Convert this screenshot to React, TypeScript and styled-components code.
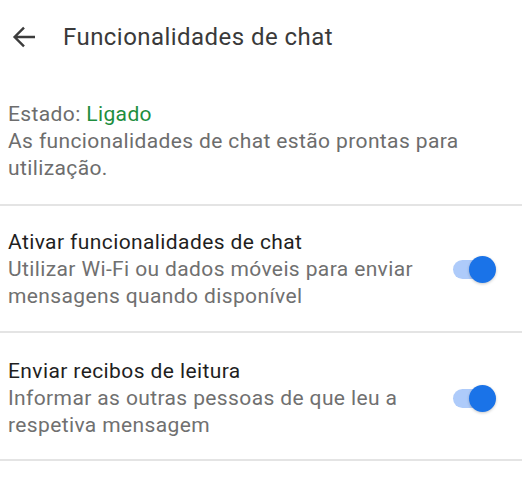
import React from "react";
import styled, { createGlobalStyle } from "styled-components";

const GlobalStyle = createGlobalStyle`
  html, body {
    margin: 0;
    padding: 0;
    background: #ffffff;
  }

  body {
    font-family: Roboto, "Noto Sans", Arial, sans-serif;
    -webkit-font-smoothing: antialiased;
  }
`;

type Setting = {
  title: string;
  description: string;
  enabled: boolean;
};

const settings: Setting[] = [
  {
    title: "Ativar funcionalidades de chat",
    description: "Utilizar Wi-Fi ou dados móveis para enviar mensagens quando disponível",
    enabled: true,
  },
  {
    title: "Enviar recibos de leitura",
    description: "Informar as outras pessoas de que leu a respetiva mensagem",
    enabled: true,
  },
];

const BackArrow: React.FC = () => (
  <svg width="24" height="24" viewBox="0 0 24 24" fill="none">
    <path
      d="M23 12H2.8M12 2.6L2.6 12l9.4 9.4"
      stroke="#3c3c3c"
      strokeWidth="2.4"
    />
  </svg>
);

const App: React.FC = () => {
  return (
    <Page>
      <GlobalStyle />
      <TopBar>
        <BackButton aria-label="Voltar">
          <BackArrow />
        </BackButton>
        <Title>Funcionalidades de chat</Title>
      </TopBar>

      <StatusBlock>
        <StatusLine>
          Estado: <StatusValue>Ligado</StatusValue>
        </StatusLine>
        <StatusText>As funcionalidades de chat estão prontas para utilização.</StatusText>
      </StatusBlock>

      {settings.map((item) => (
        <SettingRow key={item.title}>
          <SettingText>
            <SettingTitle>{item.title}</SettingTitle>
            <SettingDescription>{item.description}</SettingDescription>
          </SettingText>
          <Switch>
            <Track on={item.enabled} />
            <Thumb on={item.enabled} />
          </Switch>
        </SettingRow>
      ))}
    </Page>
  );
};

const Page = styled.div`
  width: 522px;
  min-height: 482px;
  background: #fff;
  overflow: hidden;
`;

const TopBar = styled.header`
  display: flex;
  align-items: center;
  height: 74px;
  padding-left: 12px;
`;

const BackButton = styled.button`
  display: flex;
  align-items: center;
  justify-content: center;

  width: 24px;
  height: 24px;
  padding: 0;
  margin-right: 27px;

  border: none;
  background: none;
`;

const Title = styled.h1`
  margin: 0;
  font-size: 24px;
  font-weight: 400;
  color: #3a3a3a;
  letter-spacing: 0.45px;
`;

const StatusBlock = styled.section`
  padding: 27px 50px 22px 8px;
  border-bottom: 2px solid #e4e4e4;
`;

const StatusLine = styled.p`
  margin: 0;
  font-size: 21px;
  line-height: 27px;
  letter-spacing: 0.38px;
  color: #6d6d6d;
`;

const StatusValue = styled.span`
  color: #1e8e3e;
`;

const StatusText = styled.p`
  margin: 0;
  font-size: 21px;
  line-height: 27px;
  letter-spacing: 0.38px;
  color: #6d6d6d;
`;

const SettingRow = styled.div`
  display: flex;
  align-items: center;
  padding: 22px 26px 21px 8px;
  border-bottom: 2px solid #e4e4e4;

  & + & {
    padding-top: 24px;
    padding-bottom: 20px;
  }
`;

const SettingText = styled.div`
  flex: 1;
  padding-right: 30px;
`;

const SettingTitle = styled.div`
  font-size: 21px;
  line-height: 28px;
  letter-spacing: 0.4px;
  color: #1f1f1f;
`;

const SettingDescription = styled.div`
  font-size: 21px;
  line-height: 27px;
  letter-spacing: 0.38px;
  color: #707070;
`;

const Switch = styled.div`
  position: relative;
  flex-shrink: 0;
  width: 43px;
  height: 28px;
`;

const Track = styled.div<{ on: boolean }>`
  position: absolute;
  left: 0;
  top: 5px;
  width: 37px;
  height: 19px;
  border-radius: 10px;
  background: ${(props) => (props.on ? "#aecbfa" : "#bdc1c6")};
`;

const Thumb = styled.div<{ on: boolean }>`
  position: absolute;
  top: 1px;
  left: ${(props) => (props.on ? "16px" : "0")};
  width: 27px;
  height: 27px;
  border-radius: 50%;
  background: ${(props) => (props.on ? "#1a73e8" : "#f1f3f4")};
  box-shadow: 0 1px 3px rgba(0, 0, 0, 0.22);
`;

export default App;
